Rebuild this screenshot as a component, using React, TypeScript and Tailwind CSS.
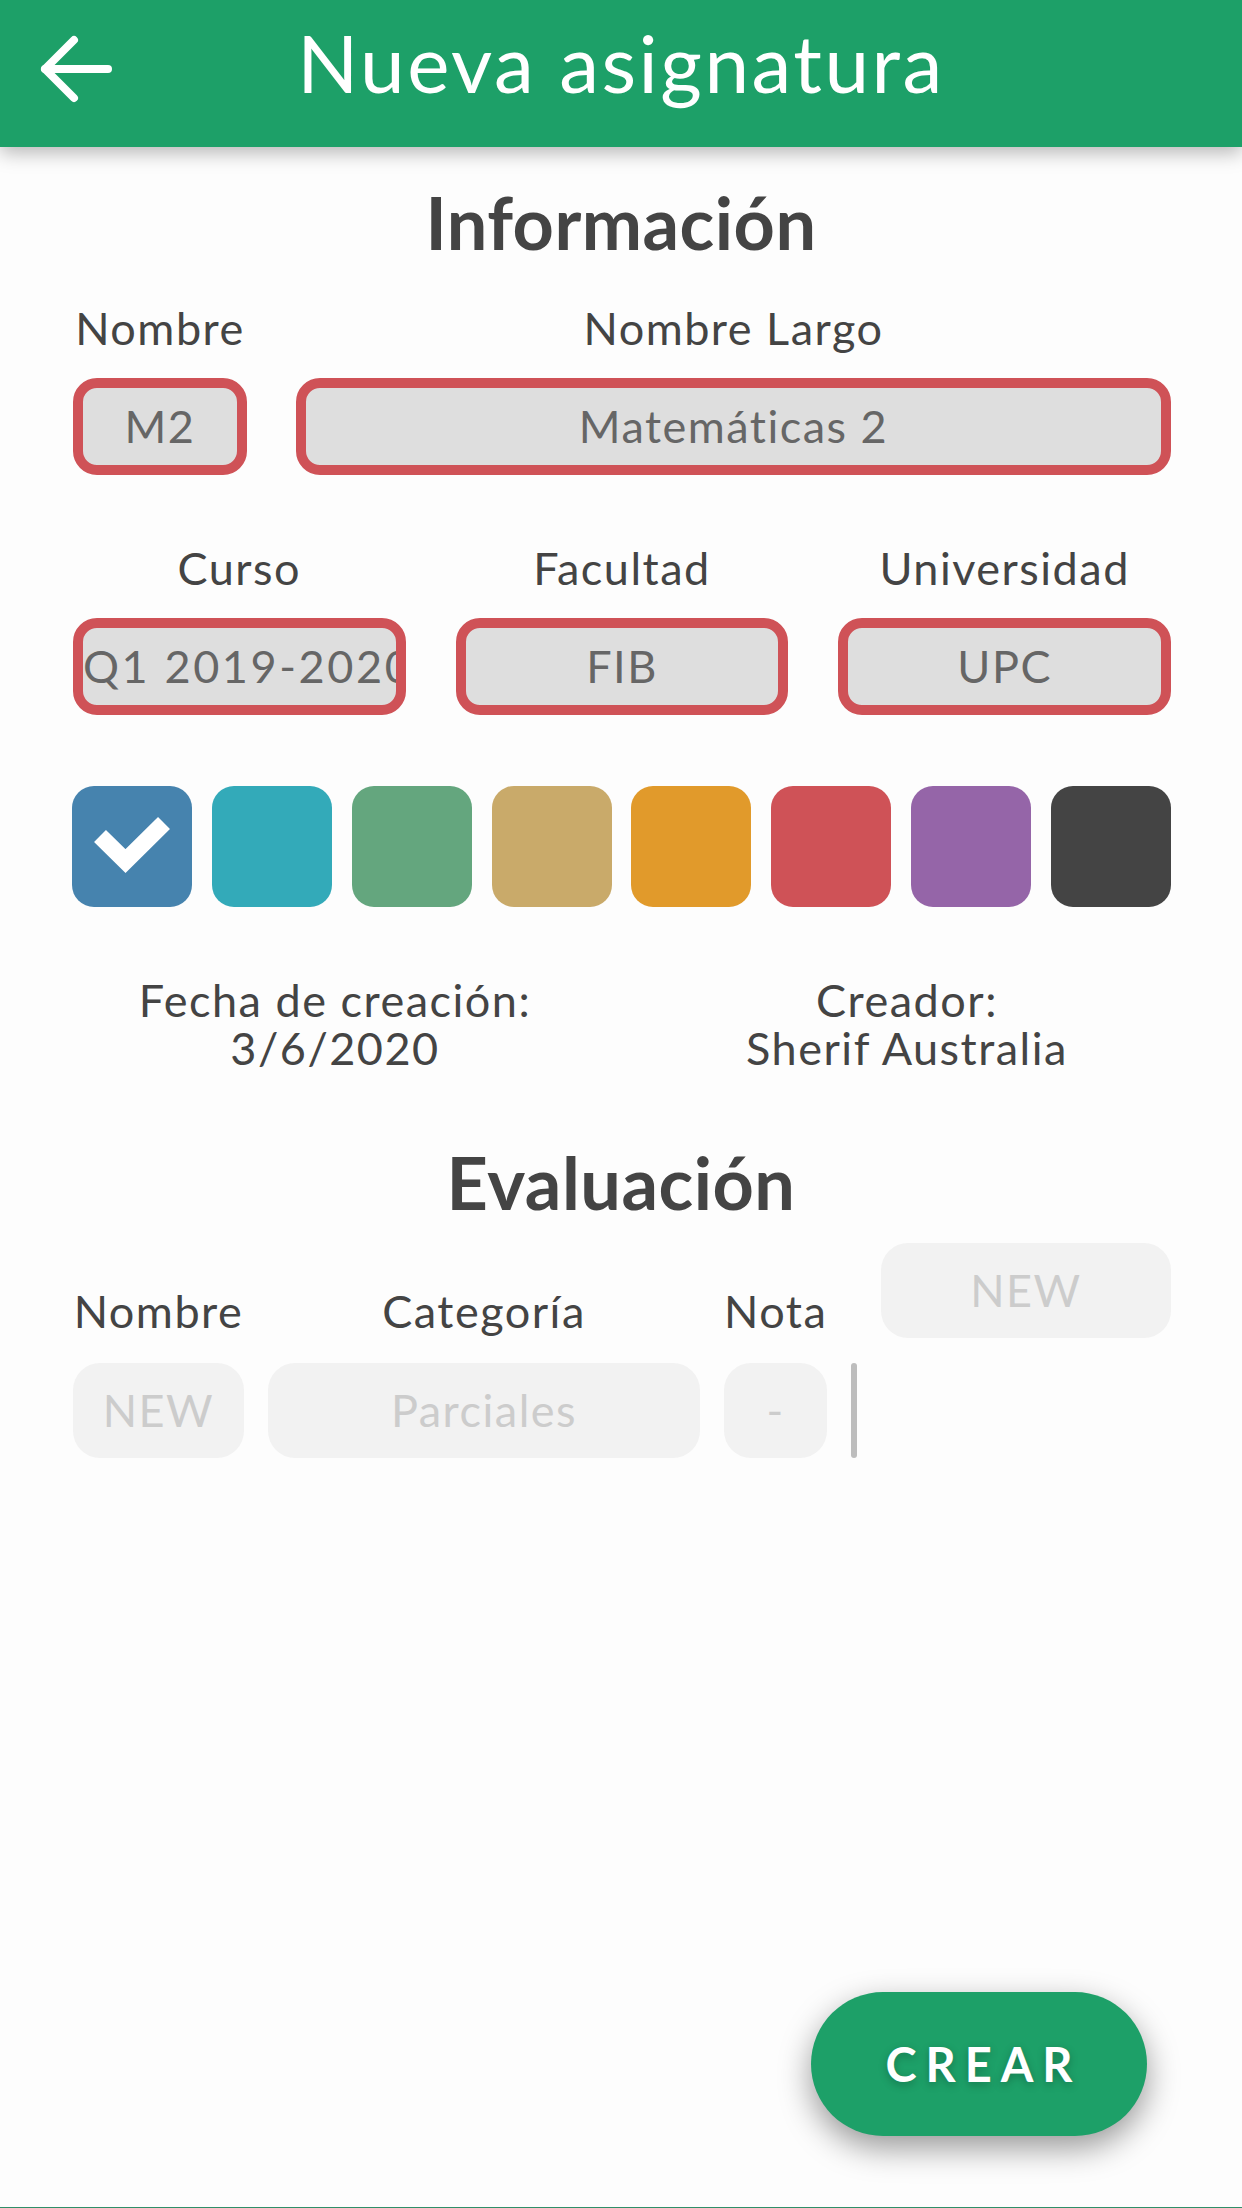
import React from "react";

const swatches = [
  "#4683ae",
  "#33aab9",
  "#64a67e",
  "#c9aa6a",
  "#e19a2b",
  "#cf5257",
  "#9565a8",
  "#444444",
];

function RedField({ value, clip }: { value: string; clip?: boolean }) {
  return (
    <div
      className={`flex h-[97px] items-center overflow-hidden whitespace-nowrap rounded-[24px] border-[10px] border-[#cf5257] bg-[#dedede] text-[45px] text-[#666666] ${
        clip ? "justify-start tracking-[2.6px]" : "justify-center tracking-[1.5px]"
      }`}
    >
      {value}
    </div>
  );
}

function GhostField({ value }: { value: string }) {
  return (
    <div className="flex h-[95px] items-center justify-center rounded-[27px] bg-[#f2f2f2] text-[45px] tracking-[1.5px] text-[#cccccc]">
      {value}
    </div>
  );
}

function Label({ children }: { children: React.ReactNode }) {
  return (
    <div className="text-center text-[45px] leading-[54px] tracking-[1.5px] text-[#444444]">
      {children}
    </div>
  );
}

export default function App() {
  return (
    <div
      className="flex h-[2208px] w-[1242px] flex-col overflow-hidden bg-[#fdfdfd]"
      style={{ fontFamily: "Lato, 'Open Sans', sans-serif" }}
    >
      {/* header */}
      <div className="relative z-10 grid h-[147px] shrink-0 grid-cols-[140px_1fr_140px] items-start bg-[#1da068] shadow-[0_6px_18px_rgba(0,0,0,0.28)]">
        <svg
          width="86"
          height="90"
          viewBox="0 0 86 90"
          className="ml-[30px] mt-[24px]"
          fill="none"
          stroke="white"
          strokeWidth="8"
          strokeLinecap="round"
          strokeLinejoin="round"
        >
          <path d="M78 45H15" />
          <path d="M44 16L15 45L44 74" />
        </svg>
        <div className="pt-[14px] text-center text-[80px] leading-[96px] tracking-[2.5px] text-white">
          Nueva asignatura
        </div>
        <div />
      </div>

      {/* información */}
      <div className="mt-[32px] text-center text-[72px] font-bold leading-[86px] tracking-[0.5px] text-[#444444]">
        Información
      </div>

      <div className="mt-[36px] grid grid-cols-[174px_1fr] gap-x-[49px] gap-y-[23px] pl-[73px] pr-[71px]">
        <Label>Nombre</Label>
        <Label>Nombre Largo</Label>
        <RedField value="M2" />
        <RedField value="Matemáticas 2" />
      </div>

      <div className="mt-[66px] grid grid-cols-3 gap-x-[50px] gap-y-[23px] pl-[73px] pr-[71px]">
        <Label>Curso</Label>
        <Label>Facultad</Label>
        <Label>Universidad</Label>
        <RedField value="Q1 2019-2020" clip />
        <RedField value="FIB" />
        <RedField value="UPC" />
      </div>

      <div className="mt-[71px] flex justify-between pl-[72px] pr-[71px]">
        {swatches.map((c, i) => (
          <div
            key={c}
            className="flex h-[121px] w-[120px] items-center justify-center rounded-[22px]"
            style={{ backgroundColor: c }}
          >
            {i === 0 && (
              <svg width="120" height="121" viewBox="0 0 120 121" fill="none">
                <polyline
                  points="28,50 53.5,75 92,37"
                  stroke="white"
                  strokeWidth="17"
                  strokeLinejoin="miter"
                  strokeLinecap="butt"
                />
              </svg>
            )}
          </div>
        ))}
      </div>

      <div className="mt-[69px] grid grid-cols-2 px-[49px] text-center text-[45px] leading-[48px] tracking-[1.5px] text-[#444444]">
        <p>
          Fecha de creación:
          <br />
          3/6/2020
        </p>
        <p>
          Creador:
          <br />
          Sherif Australia
        </p>
      </div>

      {/* evaluación */}
      <div className="mt-[67px] text-center text-[72px] font-bold leading-[86px] tracking-[0.5px] text-[#444444]">
        Evaluación
      </div>

      <div className="mt-[18px] grid grid-cols-[171px_432px_103px_6px_1fr] items-end gap-x-[24px] gap-y-[25px] pl-[73px] pr-[71px]">
        <Label>Nombre</Label>
        <Label>Categoría</Label>
        <Label>Nota</Label>
        <div />
        <GhostField value="NEW" />

        <GhostField value="NEW" />
        <GhostField value="Parciales" />
        <GhostField value="-" />
        <div className="h-[95px] w-[6px] rounded-full bg-[#bdbdbd]" />
        <div />
      </div>

      <div className="flex-1" />

      <div className="flex justify-end pr-[95px]">
        <button className="flex h-[144px] w-[336px] items-center justify-center rounded-full bg-[#1da068] pl-[9px] text-[47px] font-bold tracking-[9px] text-white shadow-[0_12px_32px_rgba(0,0,0,0.4)] [text-shadow:0_3px_8px_rgba(0,0,0,0.25)]">
          CREAR
        </button>
      </div>

      <div className="h-[71px] shrink-0" />
      <div className="h-[1px] shrink-0 bg-[#2f8f68]" />
    </div>
  );
}
